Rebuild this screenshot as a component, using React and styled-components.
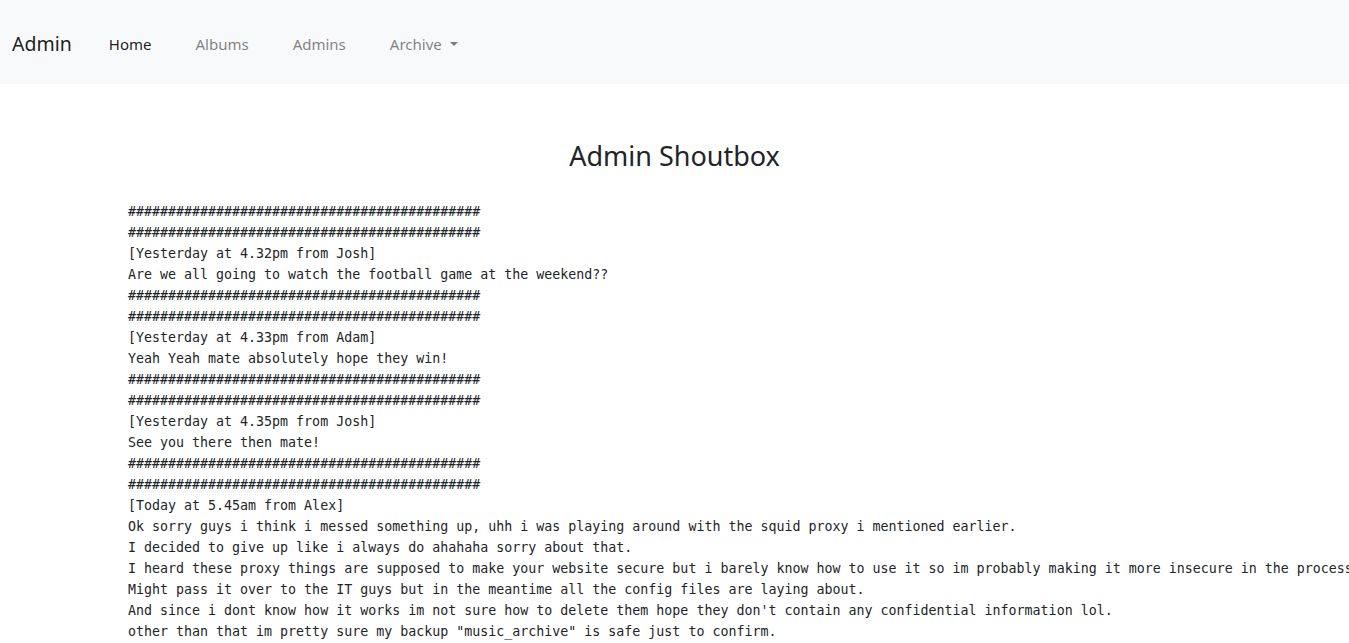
import React from "react"
import styled, { createGlobalStyle } from "styled-components"

const Global = createGlobalStyle`
  html, body { margin: 0; padding: 0; background: #fff; }
  body { font-family: "Noto Sans", "Open Sans", sans-serif; color: #212529; }
`

const Navbar = styled.nav`
  display: flex;
  align-items: center;
  height: 84px;
  padding: 3px 12px 0;
  background: #f8f9fa;
  box-sizing: border-box;
`

const Brand = styled.a`
  font-size: 19.5px;
  color: rgba(0, 0, 0, 0.9);
  margin-right: 37px;
  text-decoration: none;
`

const NavList = styled.ul`
  display: flex;
  gap: 44px;
  list-style: none;
  margin: 0;
  padding: 0;
`

const NavLink = styled.a`
  font-size: 15px;
  color: ${(p) => (p.active ? "rgba(0,0,0,0.9)" : "rgba(0,0,0,0.5)")};
  text-decoration: none;
  display: flex;
  align-items: center;
`

const Caret = styled.span`
  display: inline-block;
  margin-left: 8px;
  border-top: 4px solid rgba(0, 0, 0, 0.5);
  border-left: 4px solid transparent;
  border-right: 4px solid transparent;
`

const Main = styled.main`
  padding: 55px 0 0 128px;
`

const Title = styled.h2`
  margin: 0 0 28px -128px;
  text-align: center;
  font-weight: 400;
  font-size: 27px;
  line-height: 34px;
`

const Log = styled.pre`
  margin: 0;
  font-family: "DejaVu Sans Mono", "Liberation Mono", monospace;
  font-size: 13.3px;
  line-height: 21px;
  color: #212529;
  white-space: pre;
`

const bar = "#".repeat(44)

const posts = [
  ["Yesterday at 4.32pm from Josh", ["Are we all going to watch the football game at the weekend??"]],
  ["Yesterday at 4.33pm from Adam", ["Yeah Yeah mate absolutely hope they win!"]],
  ["Yesterday at 4.35pm from Josh", ["See you there then mate!"]],
  [
    "Today at 5.45am from Alex",
    [
      "Ok sorry guys i think i messed something up, uhh i was playing around with the squid proxy i mentioned earlier.",
      "I decided to give up like i always do ahahaha sorry about that.",
      "I heard these proxy things are supposed to make your website secure but i barely know how to use it so im probably making it more insecure in the process.",
      "Might pass it over to the IT guys but in the meantime all the config files are laying about.",
      "And since i dont know how it works im not sure how to delete them hope they don't contain any confidential information lol.",
      'other than that im pretty sure my backup "music_archive" is safe just to confirm.',
    ],
  ],
]

const text = posts
  .map(([head, lines]) => [bar, bar, `[${head}]`, ...lines].join("\n"))
  .join("\n")

export default function App() {
  return (
    <>
      <Global />
      <Navbar>
        <Brand href="#">Admin</Brand>
        <NavList>
          <li><NavLink href="#" active>Home</NavLink></li>
          <li><NavLink href="#">Albums</NavLink></li>
          <li><NavLink href="#">Admins</NavLink></li>
          <li><NavLink href="#">Archive<Caret /></NavLink></li>
        </NavList>
      </Navbar>
      <Main>
        <Title>Admin Shoutbox</Title>
        <Log>{text}</Log>
      </Main>
    </>
  )
}
